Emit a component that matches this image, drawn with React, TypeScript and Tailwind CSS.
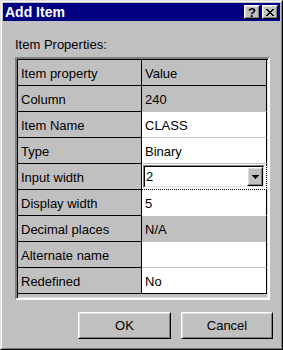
const font = { fontFamily: '"Liberation Sans", Arial, sans-serif' };

type Row = {
  label: string;
  value?: string;
  kind: "head" | "gray" | "white" | "combo";
  line: string;
};

const rows: Row[] = [
  { label: "Item property", value: "Value", kind: "head", line: "border-b-black" },
  { label: "Column", value: "240", kind: "gray", line: "border-b-[#c0c0c0]" },
  { label: "Item Name", value: "CLASS", kind: "white", line: "border-b-[#c0c0c0]" },
  { label: "Type", value: "Binary", kind: "white", line: "border-b-[#c0c0c0]" },
  { label: "Input width", value: "2", kind: "combo", line: "border-b-black border-dotted" },
  { label: "Display width", value: "5", kind: "white", line: "border-b-white" },
  { label: "Decimal places", value: "N/A", kind: "gray", line: "border-b-[#c0c0c0]" },
  { label: "Alternate name", value: "", kind: "white", line: "border-b-[#c0c0c0]" },
  { label: "Redefined", value: "No", kind: "white", line: "border-b-black" },
];

function Raised({ className, children }: { className: string; children?: React.ReactNode }) {
  return (
    <div className={`border border-t-white border-l-white border-r-black border-b-black ${className}`}>
      <div className="w-full h-full border border-t-[#dfdfdf] border-l-[#dfdfdf] border-r-[#808080] border-b-[#808080] bg-[#c0c0c0] flex items-center justify-center">
        {children}
      </div>
    </div>
  );
}

function Combo({ value }: { value: string }) {
  return (
    <div className="ml-[1px] mt-[1px] w-[122px] h-[23px] border border-t-[#808080] border-l-[#808080] border-r-white border-b-white">
      <div className="w-full h-full border border-t-black border-l-black border-r-[#dfdfdf] border-b-[#dfdfdf] bg-white flex">
        <div className="flex-1 pl-[1px] leading-[19px]">{value}</div>
        <Raised className="w-[16px] h-[19px]">
          <svg width="7" height="4" viewBox="0 0 7 4" shapeRendering="crispEdges">
            <path d="M0 0h7v1H0zM1 1h5v1H1zM2 2h3v1H2zM3 3h1v1H3z" fill="#000" />
          </svg>
        </Raised>
      </div>
    </div>
  );
}

export default function App() {
  return (
    <div style={font} className="w-[283px] h-[350px] text-[13px] text-black">
      <div className="w-full h-full border border-t-[#dfdfdf] border-l-[#dfdfdf] border-r-black border-b-black">
        <div className="w-full h-full border border-t-white border-l-white border-r-[#808080] border-b-[#808080] bg-[#c0c0c0] p-[1px] flex flex-col">
          {/* title bar */}
          <div className="h-[18px] bg-[#000080] flex items-center pl-[2px] pr-[2px]">
            <span className="flex-1 text-white font-bold text-[14px] leading-[18px]">Add Item</span>
            <Raised className="w-[16px] h-[14px]">
              <span className="font-bold text-[13px] leading-[12px] mt-[1px]">?</span>
            </Raised>
            <Raised className="ml-[2px] w-[16px] h-[14px]">
              <svg width="8" height="7" viewBox="0 0 8 7" shapeRendering="crispEdges">
                <path
                  d="M0 0h2v1H0zM6 0h2v1H6zM1 1h2v1H1zM5 1h2v1H5zM2 2h4v1H2zM3 3h2v1H3zM2 4h4v1H2zM1 5h2v1H1zM5 5h2v1H5zM0 6h2v1H0zM6 6h2v1H6z"
                  fill="#000"
                />
              </svg>
            </Raised>
          </div>

          {/* body */}
          <div className="pl-[12px] pt-[16px]">
            <div className="h-[15px] leading-[15px]">Item Properties:</div>

            <div className="mt-[5px] w-[255px] h-[243px] border-2 border-t-[#808080] border-l-[#808080] border-r-white border-b-white">
              <div className="w-full h-full border-0 shadow-[inset_1px_1px_0_#000,inset_-1px_-1px_0_#dfdfdf] p-[1px] pb-0">
                {rows.map((r) => (
                  <div key={r.label} className="flex h-[26px]">
                    <div className="w-[124px] bg-[#c0c0c0] border-r border-b border-r-black border-b-black pl-[3px] pt-[6px] leading-[15px]">
                      {r.label}
                    </div>
                    <div
                      className={`w-[125px] border-r border-b border-r-black ${r.line} ${
                        r.kind === "head" || r.kind === "gray" ? "bg-[#c0c0c0]" : "bg-white"
                      }`}
                    >
                      {r.kind === "combo" ? (
                        <Combo value={r.value ?? ""} />
                      ) : (
                        <div className="pl-[3px] pt-[6px] leading-[15px]">{r.value}</div>
                      )}
                    </div>
                  </div>
                ))}
              </div>
            </div>

            <div className="mt-[12px] flex justify-end gap-[10px] pr-[7px]">
              <Raised className="w-[93px] h-[27px]">OK</Raised>
              <Raised className="w-[92px] h-[27px]">Cancel</Raised>
            </div>
          </div>
        </div>
      </div>
    </div>
  );
}
